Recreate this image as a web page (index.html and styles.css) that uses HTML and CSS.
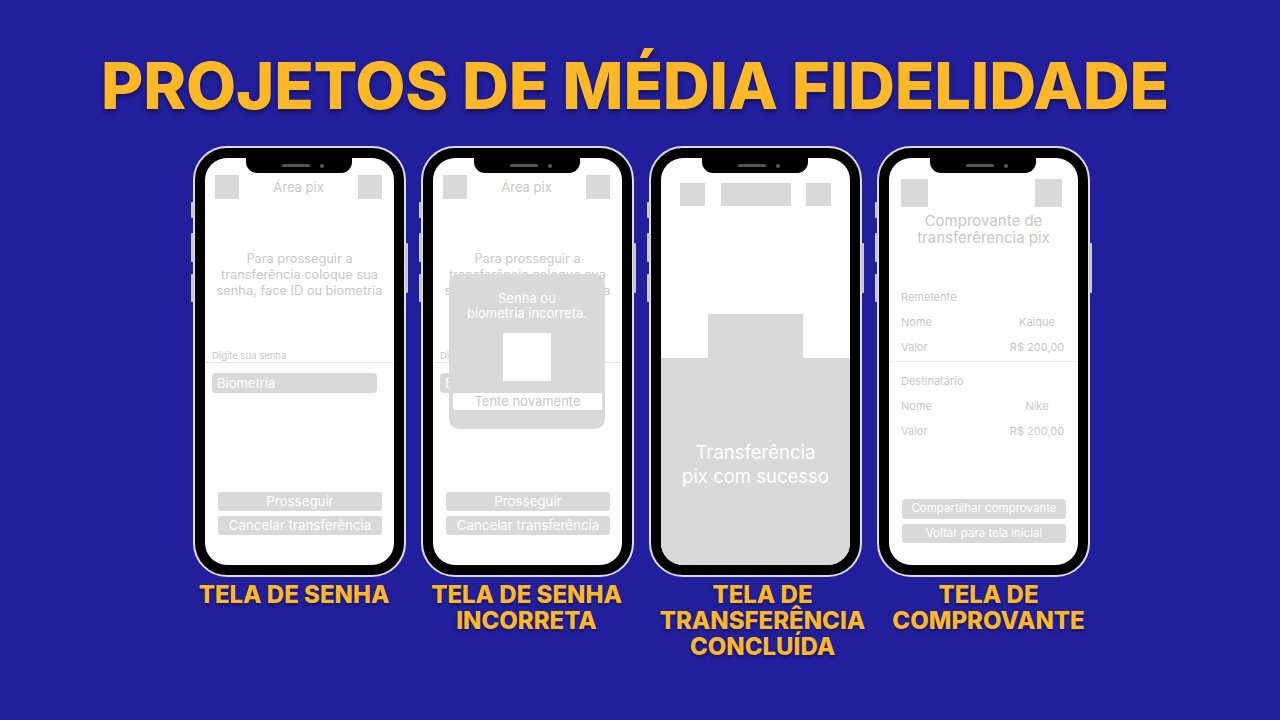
FILE: index.html
```html
<!DOCTYPE html>
<html lang="pt-BR">

<head>
    <meta charset="UTF-8">
    <meta name="viewport" content="width=device-width, initial-scale=1.0">
    <title>Projetos de média fidelidade</title>
    <link rel="stylesheet" href="styles.css">
</head>

<body>
    <h1 class="title">PROJETOS DE MÉDIA FIDELIDADE</h1>

    <div class="row">
        <!-- tela de senha -->
        <div class="col">
            <div class="phone">
                <span class="key key-a"></span><span class="key key-b"></span><span class="key key-c"></span>
                <span class="key key-r"></span>
                <div class="screen">
                    <div class="notch"><span class="speaker"></span><span class="cam"></span></div>
                    <div class="hdr">
                        <div class="sq"></div>
                        <span class="hdr-title">Área pix</span>
                        <div class="sq"></div>
                    </div>
                    <p class="msg">Para prosseguir a<br>transferência coloque sua<br>senha, face ID ou biometria</p>
                    <div class="field-label">Digite sua senha</div>
                    <div class="field">Biometria</div>
                    <div class="actions">
                        <div class="btn">Prosseguir</div>
                        <div class="btn">Cancelar transferência</div>
                    </div>
                </div>
            </div>
            <div class="label label-1">TELA DE SENHA</div>
        </div>

        <!-- tela de senha incorreta -->
        <div class="col">
            <div class="phone">
                <span class="key key-a"></span><span class="key key-b"></span><span class="key key-c"></span>
                <span class="key key-r"></span>
                <div class="screen">
                    <div class="notch"><span class="speaker"></span><span class="cam"></span></div>
                    <div class="hdr">
                        <div class="sq"></div>
                        <span class="hdr-title">Área pix</span>
                        <div class="sq"></div>
                    </div>
                    <p class="msg">Para prosseguir a<br>transferência coloque sua<br>senha, face ID ou biometria</p>
                    <div class="field-label">Digite sua senha</div>
                    <div class="field">Biometria</div>
                    <div class="actions">
                        <div class="btn">Prosseguir</div>
                        <div class="btn">Cancelar transferência</div>
                    </div>
                    <div class="modal">
                        <p class="modal-text">Senha ou<br>biometria incorreta.</p>
                        <div class="modal-img"></div>
                        <div class="modal-btn">Tente novamente</div>
                    </div>
                </div>
            </div>
            <div class="label label-2">TELA DE SENHA<br>INCORRETA</div>
        </div>

        <!-- tela de transferência concluída -->
        <div class="col">
            <div class="phone">
                <span class="key key-a"></span><span class="key key-b"></span><span class="key key-c"></span>
                <span class="key key-r"></span>
                <div class="screen">
                    <div class="notch"><span class="speaker"></span><span class="cam"></span></div>
                    <div class="hdr hdr-done">
                        <div class="sq sq-sm"></div>
                        <div class="bar"></div>
                        <div class="sq sq-sm"></div>
                    </div>
                    <div class="done-box"></div>
                    <div class="done">Transferência<br>pix com sucesso</div>
                </div>
            </div>
            <div class="label label-3">TELA DE<br>TRANSFERÊNCIA<br>CONCLUÍDA</div>
        </div>

        <!-- tela de comprovante -->
        <div class="col">
            <div class="phone">
                <span class="key key-a"></span><span class="key key-b"></span><span class="key key-c"></span>
                <span class="key key-r"></span>
                <div class="screen">
                    <div class="notch"><span class="speaker"></span><span class="cam"></span></div>
                    <div class="hdr hdr-rcpt">
                        <div class="sq sq-lg"></div>
                        <div class="sq sq-lg"></div>
                    </div>
                    <p class="rcpt-title">Comprovante de<br>transferêrencia pix</p>
                    <div class="sect">
                        <div class="line">Remetente</div>
                        <div class="line"><span>Nome</span><span class="val">Kaique</span></div>
                        <div class="line"><span>Valor</span><span class="val">R$ 200,00</span></div>
                    </div>
                    <div class="sect sect-b">
                        <div class="line">Destinatário</div>
                        <div class="line"><span>Nome</span><span class="val">Nike</span></div>
                        <div class="line"><span>Valor</span><span class="val">R$ 200,00</span></div>
                    </div>
                    <div class="actions actions-sm">
                        <div class="btn">Compartilhar comprovante</div>
                        <div class="btn">Voltar para tela inicial</div>
                    </div>
                </div>
            </div>
            <div class="label label-4">TELA DE<br>COMPROVANTE</div>
        </div>
    </div>
</body>

</html>
```

FILE: styles.css
```css
body {
    margin: 0;
    width: 1280px;
    height: 720px;
    overflow: hidden;
    background-color: #221f9c;
    font-family: Inter, "Noto Sans", sans-serif;
}

.title {
    margin: 0;
    padding: 46px 10px 0 0;
    text-align: center;
    font-size: 65px;
    line-height: 80px;
    font-weight: 800;
    letter-spacing: -0.2px;
    color: #fcb827;
    text-shadow: 0 3px 4px rgba(0, 0, 0, 0.4);
}

.row {
    display: flex;
    justify-content: center;
    gap: 15px;
    margin-top: 20px;
    padding-left: 3px;
}

.col {
    width: 213px;
    display: flex;
    flex-direction: column;
    align-items: center;
}

.label {
    margin-top: 5px;
    text-align: center;
    white-space: nowrap;
    font-size: 24px;
    line-height: 26px;
    font-weight: 800;
    color: #fcb827;
    text-shadow: 0 2px 3px rgba(0, 0, 0, 0.35);
}

/* os títulos não ficam bem no centro do celular */
.label-1 { margin-right: 11px; }
.label-2 { margin-right: 2px; }
.label-3 { margin-left: 14px; }
.label-4 { margin-left: 10px; }

/* moldura do celular */
.phone {
    position: relative;
    box-sizing: border-box;
    width: 213px;
    height: 431px;
    padding: 10px;
    border: 2px solid #dcdcee;
    border-radius: 34px;
    background-color: #000;
}

.key {
    position: absolute;
    width: 3px;
    border-radius: 1px;
    background-color: #c9c9d6;
}

.key-a { left: -4px; top: 54px; height: 16px; }
.key-b { left: -4px; top: 85px; height: 29px; }
.key-c { left: -4px; top: 126px; height: 28px; }
.key-r { right: -4px; top: 95px; height: 50px; }

.screen {
    position: relative;
    height: 100%;
    display: flex;
    flex-direction: column;
    background-color: #fff;
    border-radius: 22px;
    overflow: hidden;
    color: #c8c8c8;
}

.notch {
    position: absolute;
    top: 0;
    left: 41px;
    width: 106px;
    height: 15px;
    display: flex;
    justify-content: center;
    align-items: center;
    gap: 10px;
    background-color: #000;
    border-radius: 0 0 11px 11px;
}

.speaker {
    width: 28px;
    height: 3px;
    border-radius: 2px;
    background-color: #555;
    margin-left: 8px;
}

.cam {
    width: 4px;
    height: 4px;
    border-radius: 50%;
    background-color: #555;
}

/* cabeçalho */
.hdr {
    display: flex;
    justify-content: space-between;
    align-items: center;
    padding: 17px 12px 0 10px;
}

.sq {
    width: 24px;
    height: 24px;
    background-color: #d9d9d9;
}

.hdr-title {
    font-size: 13px;
}

.msg {
    margin: 52px 0 0;
    text-align: center;
    font-size: 12.8px;
    line-height: 16px;
}

.field-label {
    margin-top: 51px;
    padding-left: 7px;
    font-size: 9.5px;
    line-height: 12px;
    border-bottom: 1px solid #e6e6e6;
}

.field {
    margin: 10px 17px 0 7px;
    height: 20px;
    padding-left: 5px;
    border-radius: 4px;
    background-color: #d9d9d9;
    color: #fff;
    font-size: 13px;
    line-height: 20px;
}

.actions {
    margin-top: auto;
    padding: 0 12px 30px 13px;
    display: flex;
    flex-direction: column;
    gap: 5px;
}

.btn {
    height: 19px;
    border-radius: 3px;
    background-color: #d9d9d9;
    color: #fff;
    text-align: center;
    font-size: 13.3px;
    line-height: 19px;
}

/* modal de erro */
.modal {
    position: absolute;
    top: 116px;
    left: 16px;
    width: 156px;
    height: 155px;
    border-radius: 10px;
    background-color: #d9d9d9;
}

.modal-text {
    margin: 17px 0 0;
    text-align: center;
    color: #fff;
    font-size: 13px;
    line-height: 15px;
}

.modal-img {
    width: 48px;
    height: 48px;
    margin: 12px auto 0;
    background-color: #fff;
}

.modal-btn {
    margin: 12px 3px 0 4px;
    height: 17px;
    border-radius: 2px;
    background-color: #fff;
    text-align: center;
    font-size: 13px;
    line-height: 17px;
}

/* transferência concluída */
.hdr-done {
    padding: 25px 19px 0 19px;
}

.sq-sm {
    width: 25px;
    height: 23px;
}

.bar {
    width: 70px;
    height: 23px;
    background-color: #d9d9d9;
}

.done-box {
    width: 95px;
    height: 44px;
    margin: 108px auto 0;
    background-color: #d9d9d9;
}

.done {
    flex: 1;
    padding-top: 82px;
    background-color: #d9d9d9;
    color: #fff;
    text-align: center;
    font-size: 18.5px;
    line-height: 24px;
}

/* comprovante */
.hdr-rcpt {
    padding: 21px 16px 0 12px;
}

.sq-lg {
    width: 27px;
    height: 28px;
}

.rcpt-title {
    margin: 5px 0 0;
    text-align: center;
    font-size: 15px;
    line-height: 17px;
}

.sect {
    margin-top: 39px;
    padding: 0 11px 0 12px;
    font-size: 11px;
    line-height: 25px;
}

.sect-b {
    margin-top: 1px;
    padding-top: 7px;
    border-top: 1px solid #ececec;
}

.line {
    display: flex;
    justify-content: space-between;
}

.val {
    width: 60px;
    text-align: center;
}

.actions-sm {
    padding-bottom: 22px;
}

.actions-sm .btn {
    height: 19.5px;
    font-size: 11.5px;
    line-height: 19.5px;
}
```
